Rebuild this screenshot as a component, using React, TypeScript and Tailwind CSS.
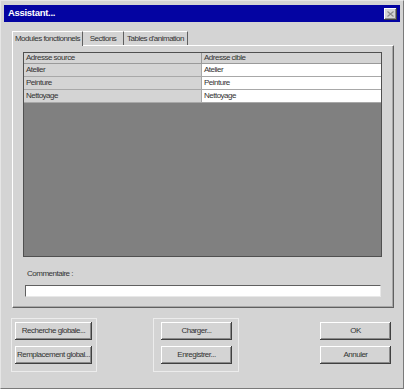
import React from 'react';

const txt = "font-['Liberation_Sans',Arial,sans-serif] text-[8px] tracking-[-0.5px] text-[#333333]";

const raised = 'shadow-[inset_-1px_-1px_#404040,inset_1px_1px_#ffffff,inset_-2px_-2px_#8a8a8a]';

function Btn({ label, width }: { label: string; width: string }) {
  return (
    <div className={`${width} h-[18px] flex items-center justify-center bg-[#d4d4d4] ${raised} ${txt} text-[#4a4a4a]`}>
      {label}
    </div>
  );
}

const rows = [
  { source: 'Atelier', cible: 'Atelier' },
  { source: 'Peinture', cible: 'Peinture' },
  { source: 'Nettoyage', cible: 'Nettoyage' },
];

export default function App() {
  return (
    <div className="w-[406px] h-[390px] bg-white">
      <div className="w-[404px] h-[389px] bg-[#d4d4d4] border border-t-[#e6e6e6] border-l-[#e6e6e6] border-r-[#7a7a7a] border-b-[#7a7a7a] px-[3px] pt-[4px] flex flex-col">
        {/* Title bar */}
        <div className="h-[17px] bg-[#0404a2] flex items-center justify-between pl-[4px] pr-[3px]">
          <span className="font-['Liberation_Sans',Arial,sans-serif] text-[9.5px] font-bold tracking-[-0.3px] text-white">Assistant...</span>
          <div className={`w-[13px] h-[12px] bg-[#d4d4d4] ${raised} flex items-center justify-center`}>
            <svg width="7" height="6" viewBox="0 0 7 6">
              <path d="M0.5 0.5 L6.5 5.5 M6.5 0.5 L0.5 5.5" stroke="#8a8a8a" strokeWidth="1.1" fill="none" />
            </svg>
          </div>
        </div>

        {/* Tabs */}
        <div className="mt-[9px] ml-[8px] flex items-end h-[14px]">
          <div className={`w-[71px] flex items-center justify-center border-t border-l border-r border-t-white border-l-white border-r-[#606060] bg-[#d4d4d4] ${txt} relative z-10 -mb-px h-[15px]`}>
            Modules fonctionnels
          </div>
          <div className={`h-[14px] w-[41px] flex items-center justify-center border-t border-r border-t-white border-r-[#606060] bg-[#d4d4d4] ${txt}`}>
            Sections
          </div>
          <div className={`h-[14px] w-[64px] flex items-center justify-center border-t border-r border-t-white border-r-[#606060] bg-[#d4d4d4] ${txt}`}>
            Tables d'animation
          </div>
        </div>

        {/* Tab panel */}
        <div className="ml-[8px] w-[382px] h-[263px] border border-t-white border-l-white border-r-[#606060] border-b-[#606060] shadow-[inset_-1px_-1px_#a8a8a8] pt-[6px] pl-[10px]">
          <div className="w-[359px] h-[205px] bg-[#808080] border border-[#505050] flex flex-col">
            <div className="flex h-[11px] bg-[#d4d4d4] border-b border-[#9a9a9a]">
              <div className={`w-[178px] border-r border-[#9a9a9a] pl-[2px] flex items-center ${txt}`}>Adresse source</div>
              <div className={`flex-1 pl-[2px] flex items-center ${txt}`}>Adresse cible</div>
            </div>
            {rows.map((r) => (
              <div key={r.source} className="flex h-[13px] border-b border-[#a8a8a8]">
                <div className={`w-[178px] bg-[#d4d4d4] border-r border-[#a8a8a8] pl-[2px] flex items-center ${txt}`}>{r.source}</div>
                <div className={`flex-1 bg-white pl-[2px] flex items-center ${txt}`}>{r.cible}</div>
              </div>
            ))}
          </div>
          <div className={`mt-[12px] ml-[4px] h-[10px] flex items-center ${txt} text-[#4a4a4a]`}>Commentaire :</div>
          <div className="mt-[6px] ml-[2px] w-[356px] h-[12px] bg-white border border-t-[#606060] border-l-[#606060] border-r-[#e8e8e8] border-b-[#e8e8e8]" />
        </div>

        {/* Bottom buttons */}
        <div className="mt-[10px] ml-[7px] flex items-start">
          <div className="w-[86px] h-[54px] border border-[#ececec] pt-[3px] pl-[3px] flex flex-col gap-[6px]">
            <Btn label="Recherche globale..." width="w-[77px]" />
            <Btn label="Remplacement global..." width="w-[77px]" />
          </div>
          <div className="ml-[56px] w-[86px] h-[54px] border border-[#ececec] pt-[3px] pl-[7px] flex flex-col gap-[6px]">
            <Btn label="Charger..." width="w-[71px]" />
            <Btn label="Enregistrer..." width="w-[71px]" />
          </div>
          <div className="ml-[81px] pt-[4px] flex flex-col gap-[6px]">
            <Btn label="OK" width="w-[71px]" />
            <Btn label="Annuler" width="w-[71px]" />
          </div>
        </div>
      </div>
    </div>
  );
}
